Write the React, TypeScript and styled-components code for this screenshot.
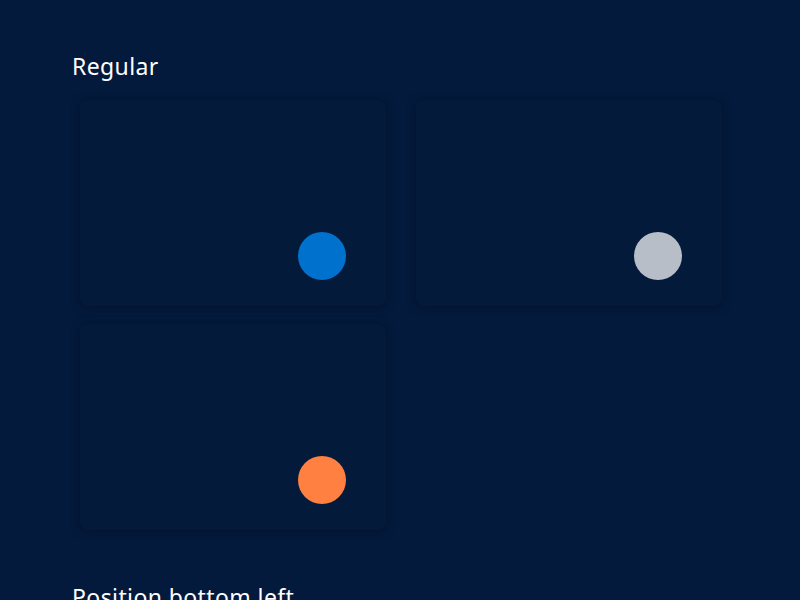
import React from "react";
import styled, { createGlobalStyle } from "styled-components";

const GlobalStyle = createGlobalStyle`
  body {
    margin: 0;
    background: #041a3c;
    font-family: "Noto Sans", "Lato", sans-serif;
  }
`;

const Page = styled.main`
  padding: 51px 0 0 72px;
`;

const Section = styled.section`
  margin-bottom: 52px;
`;

const Title = styled.h2`
  margin: 0 0 19px;
  font-size: 23px;
  line-height: 30px;
  letter-spacing: 0.4px;
  font-weight: 400;
  color: #ffffff;
`;

const Grid = styled.div`
  display: grid;
  grid-template-columns: 306px 306px;
  column-gap: 30px;
  row-gap: 18px;
  margin-left: 8px;
`;

const Card = styled.div`
  position: relative;
  height: 206px;
  border-radius: 8px;
  background: #031a3b;
  box-shadow: 0 1px 8px rgba(0, 8, 30, 0.5);
`;

const Dot = styled.span<{ $color: string; $left?: boolean }>`
  position: absolute;
  bottom: 26px;
  ${(p) => (p.$left ? "left: 40px;" : "right: 40px;")}
  width: 48px;
  height: 48px;
  border-radius: 50%;
  background: ${(p) => p.$color};
`;

const colors = ["#0072ce", "#b8bec8", "#ff8040"];

export default function App() {
  return (
    <>
      <GlobalStyle />
      <Page>
        <Section>
          <Title>Regular</Title>
          <Grid>
            {colors.map((c) => (
              <Card key={c}>
                <Dot $color={c} />
              </Card>
            ))}
          </Grid>
        </Section>
        <Section>
          <Title>Position bottom left</Title>
          <Grid>
            {colors.map((c) => (
              <Card key={c}>
                <Dot $color={c} $left />
              </Card>
            ))}
          </Grid>
        </Section>
      </Page>
    </>
  );
}
